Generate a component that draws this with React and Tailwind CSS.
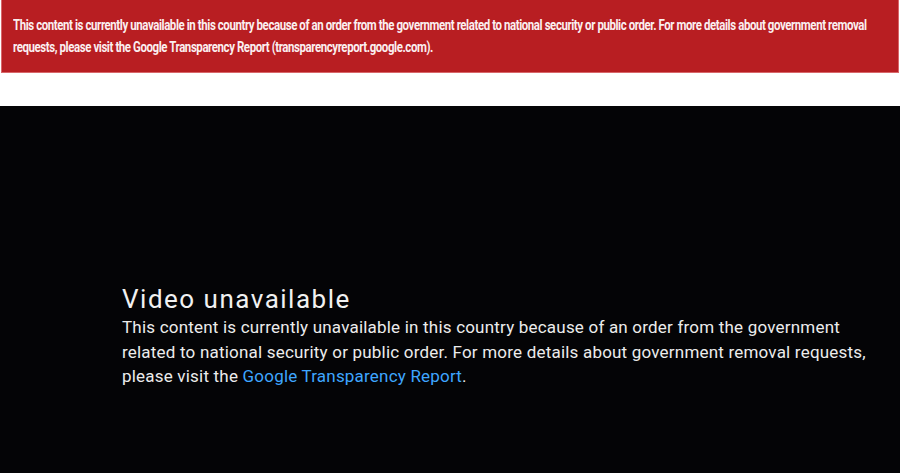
import React from "react";

const Banner = () => (
  <div className="mx-px h-[73px] bg-[#b81e22] border border-[#d8676a] border-t-0 px-[11px] pt-[14px] overflow-hidden">
    <p
      className="inline-block origin-left scale-x-[0.818] text-[#fbeff0] font-bold text-[14px] leading-[22px] tracking-[-0.5px] whitespace-nowrap"
      style={{ fontFamily: "Roboto, sans-serif" }}
    >
      This content is currently unavailable in this country because of an order from the government related to national
      security or public order. For more details about government removal
      <br />
      requests, please visit the Google Transparency Report (transparencyreport.google.com).
    </p>
  </div>
);

const Player = () => (
  <div className="flex-1 bg-[#040406] pl-[122px] pt-[177px]" style={{ fontFamily: "Roboto, sans-serif" }}>
    <h1 className="text-[#f1f1f1] text-[26px] leading-[32px] font-normal tracking-[1.5px]">Video unavailable</h1>
    <p className="text-[#ececec] text-[17px] leading-[24.5px] tracking-[0.2px] whitespace-nowrap">
      This content is currently unavailable in this country because of an order from the government
      <br />
      related to national security or public order. For more details about government removal requests,
      <br />
      please visit the <a className="text-[#3ea6ff]">Google Transparency Report</a>.
    </p>
  </div>
);

export default function App() {
  return (
    <div className="w-[900px] h-[473px] bg-white flex flex-col overflow-hidden">
      <Banner />
      <div className="h-[33px]" />
      <Player />
    </div>
  );
}
